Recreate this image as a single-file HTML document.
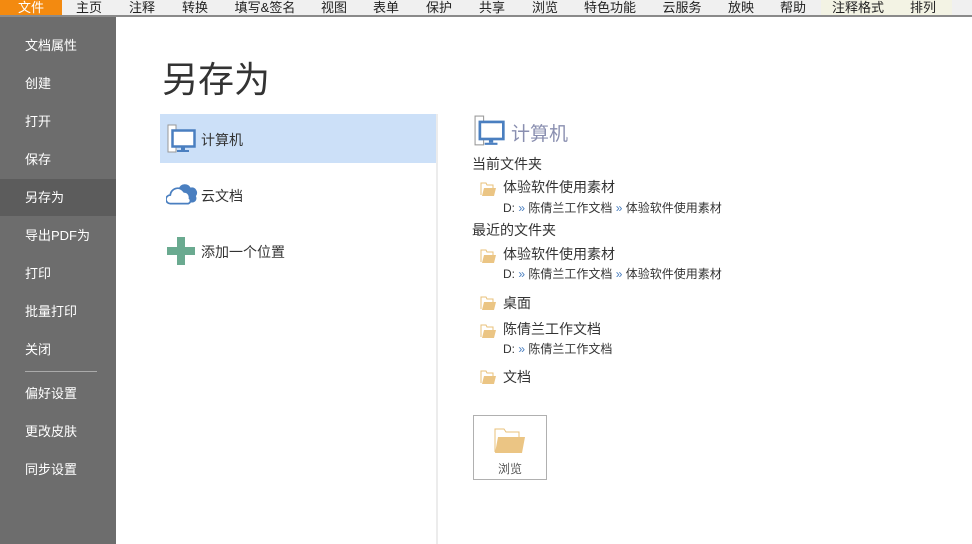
<!DOCTYPE html>
<html><head><meta charset="utf-8"><style>
*{margin:0;padding:0;box-sizing:border-box}
body{width:972px;height:544px;overflow:hidden;background:#fff;font-family:"Liberation Sans","Noto Sans CJK SC",sans-serif;position:relative;color:#333}
.a{position:absolute;white-space:nowrap}
#top{position:absolute;left:0;top:0;width:972px;height:17px;background:#f0f0f0;border-bottom:2px solid #8a8a8a}
.t{position:absolute;top:0;font-size:13px;line-height:15px;color:#222;transform:translateX(-50%)}
#side{position:absolute;left:0;top:17px;width:116px;height:527px;background:#6d6d6d}
.s{position:absolute;left:25px;font-size:13px;color:#fff;line-height:16px}
.f{font-size:14px;color:#333}
.p{font-size:12px;color:#333}
</style></head><body>
<div id="top">
<div class="a" style="left:0;top:0;width:62px;height:15px;background:#f38a10"></div>
<div class="a" style="left:821px;top:0;width:131px;height:15px;background:#f3f3e4"></div>
<span class="t" style="left:31px;color:#fff">文件</span>
<span class="t" style="left:89px">主页</span>
<span class="t" style="left:142px">注释</span>
<span class="t" style="left:195px">转换</span>
<span class="t" style="left:265px">填写&amp;签名</span>
<span class="t" style="left:334px">视图</span>
<span class="t" style="left:386px">表单</span>
<span class="t" style="left:439px">保护</span>
<span class="t" style="left:492px">共享</span>
<span class="t" style="left:545px">浏览</span>
<span class="t" style="left:610px">特色功能</span>
<span class="t" style="left:682px">云服务</span>
<span class="t" style="left:741px">放映</span>
<span class="t" style="left:793px">帮助</span>
<span class="t" style="left:858px">注释格式</span>
<span class="t" style="left:923px">排列</span>
</div>
<div id="side">
<div class="a" style="left:0;top:162px;width:116px;height:37px;background:#5c5c5c"></div>
<span class="s" style="top:21px">文档属性</span>
<span class="s" style="top:59px">创建</span>
<span class="s" style="top:97px">打开</span>
<span class="s" style="top:135px">保存</span>
<span class="s" style="top:173px">另存为</span>
<span class="s" style="top:211px">导出PDF为</span>
<span class="s" style="top:249px">打印</span>
<span class="s" style="top:287px">批量打印</span>
<span class="s" style="top:325px">关闭</span>
<div class="a" style="left:25px;top:354px;width:72px;height:1px;background:#aaa"></div>
<span class="s" style="top:369px">偏好设置</span>
<span class="s" style="top:407px">更改皮肤</span>
<span class="s" style="top:445px">同步设置</span>
</div>
<div class="a" style="left:162px;top:58px;font-size:36px;line-height:44px;color:#333">另存为</div>
<div class="a" style="left:160px;top:114px;width:276px;height:49px;background:#cce0f8"></div>
<div class="a" style="left:436px;top:114px;width:2px;height:430px;background:#ececec"></div>
<svg class="a" style="left:167px;top:124px" width="30" height="30" viewBox="0 0 30 30"><rect x="1" y="1" width="8" height="27" fill="#fff" stroke="#999"/><rect x="5.5" y="6.5" width="22" height="16" fill="#fff" stroke="#4a7fc0" stroke-width="2.5"/><rect x="14" y="23" width="4" height="3" fill="#4a7fc0"/><rect x="10" y="26" width="12" height="2" fill="#4a7fc0"/></svg>
<span class="a f" style="left:201px;top:130px">计算机</span>
<svg class="a" style="left:166px;top:182px" width="32" height="24" viewBox="0 0 30 22"><path d="M12 6a6 6 0 0 1 11 -1a5 5 0 0 1 5 8a4 4 0 0 1 -3 6h-2" fill="#4a7fc0"/><path d="M4 20a4 4 0 0 1 0-8a7 7 0 0 1 13-3a5 5 0 0 1 5 6a3 3 0 0 1 -1 5z" fill="#fff" stroke="#4a7fc0" stroke-width="1.6"/></svg>
<span class="a f" style="left:201px;top:186px">云文档</span>
<svg class="a" style="left:167px;top:237px" width="28" height="28"><rect x="10" y="0" width="8" height="28" fill="#6aaa90"/><rect x="0" y="10" width="28" height="8" fill="#6aaa90"/></svg>
<span class="a f" style="left:201px;top:242px">添加一个位置</span>
<svg class="a" style="left:474px;top:115px" width="32" height="32" viewBox="0 0 30 30"><rect x="1" y="1" width="8" height="27" fill="#fff" stroke="#999"/><rect x="5.5" y="6.5" width="22" height="16" fill="#fff" stroke="#4a7fc0" stroke-width="2.5"/><rect x="14" y="23" width="4" height="3" fill="#4a7fc0"/><rect x="10" y="26" width="12" height="2" fill="#4a7fc0"/></svg>
<span class="a" style="left:511px;top:119px;font-size:19px;color:#8a8fb0">计算机</span>
<span class="a f" style="left:472px;top:154px">当前文件夹</span>
<span class="a f" style="left:472px;top:220px">最近的文件夹</span>
<svg width="0" height="0" style="position:absolute"><defs><g id="fd"><path d="M1 14V2h5l1 2h6v3" fill="#fff" stroke="#e8c07a"/><path d="M2 15l2-8h12l-2 8z" fill="#ebc584"/></g></defs></svg>
<svg class="a" style="left:480px;top:181px" width="17" height="16"><use href="#fd"/></svg>
<span class="a f" style="left:503px;top:177px">体验软件使用素材</span>
<span class="a p" style="left:503px;top:199px">D: <span style="color:#4a7fc0">»</span> 陈倩兰工作文档 <span style="color:#4a7fc0">»</span> 体验软件使用素材</span>
<svg class="a" style="left:480px;top:248px" width="17" height="16"><use href="#fd"/></svg>
<span class="a f" style="left:503px;top:244px">体验软件使用素材</span>
<span class="a p" style="left:503px;top:265px">D: <span style="color:#4a7fc0">»</span> 陈倩兰工作文档 <span style="color:#4a7fc0">»</span> 体验软件使用素材</span>
<svg class="a" style="left:480px;top:295px" width="17" height="16"><use href="#fd"/></svg>
<span class="a f" style="left:503px;top:293px">桌面</span>
<svg class="a" style="left:480px;top:323px" width="17" height="16"><use href="#fd"/></svg>
<span class="a f" style="left:503px;top:319px">陈倩兰工作文档</span>
<span class="a p" style="left:503px;top:340px">D: <span style="color:#4a7fc0">»</span> 陈倩兰工作文档</span>
<svg class="a" style="left:480px;top:369px" width="17" height="16"><use href="#fd"/></svg>
<span class="a f" style="left:503px;top:367px">文档</span>
<div class="a" style="left:473px;top:415px;width:74px;height:65px;border:1px solid #b0b0b0"></div>
<svg class="a" style="left:494px;top:428px" width="32" height="26"><path d="M1 24V1h9l2 3h13v6" fill="#fff" stroke="#e8c07a"/><path d="M1 25l3-16h27l-3 16z" fill="#ebc584"/></svg>
<span class="a" style="left:498px;top:460px;font-size:12px;color:#555">浏览</span>
</body></html>
